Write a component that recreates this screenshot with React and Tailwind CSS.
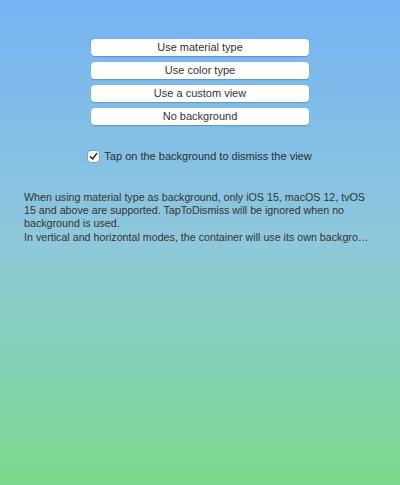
export default function App() {
  const buttons = ["Use material type", "Use color type", "Use a custom view", "No background"];
  return (
    <div
      className="h-[485px] w-[400px] overflow-hidden bg-gradient-to-b from-[#76b3f3] via-[#8ec8da] to-[#7ad98a] text-[#2b2f33]"
      style={{ fontFamily: '"Liberation Sans", Arial, sans-serif' }}
    >
      <div className="flex flex-col items-center gap-[6px] pt-[39px]">
        {buttons.map((b) => (
          <button
            key={b}
            className="flex h-[17px] w-[218px] items-center justify-center rounded-[4px] bg-white text-[11px] leading-none text-[#333] shadow-[0_0.5px_1px_rgba(0,0,0,0.2)]"
          >
            {b}
          </button>
        ))}
      </div>

      <label className="mt-[23px] flex items-center justify-center gap-[5px] text-[11px]">
        <span className="flex h-[11px] w-[11px] items-center justify-center rounded-[3px] bg-white shadow-[0_0_0_0.5px_rgba(0,0,0,0.25)]">
          <svg width="9" height="9" viewBox="0 0 10 10" fill="none">
            <path d="M1.5 5.2 L4 7.8 L8.6 1.6" stroke="#222" strokeWidth="1.6" strokeLinecap="round" strokeLinejoin="round" />
          </svg>
        </span>
        <span>Tap on the background to dismiss the view</span>
      </label>

      <div className="ml-[24px] mt-[26px] w-[350px] text-[10.7px] leading-[13.4px] text-[#333]">
        <p>
          When using material type as background, only iOS 15, macOS 12, tvOS 15 and above are supported. TapToDismiss
          will be ignored when no background is used.
        </p>
        <p className="truncate">
          In vertical and horizontal modes, the container will use its own background colors
        </p>
      </div>
    </div>
  );
}
